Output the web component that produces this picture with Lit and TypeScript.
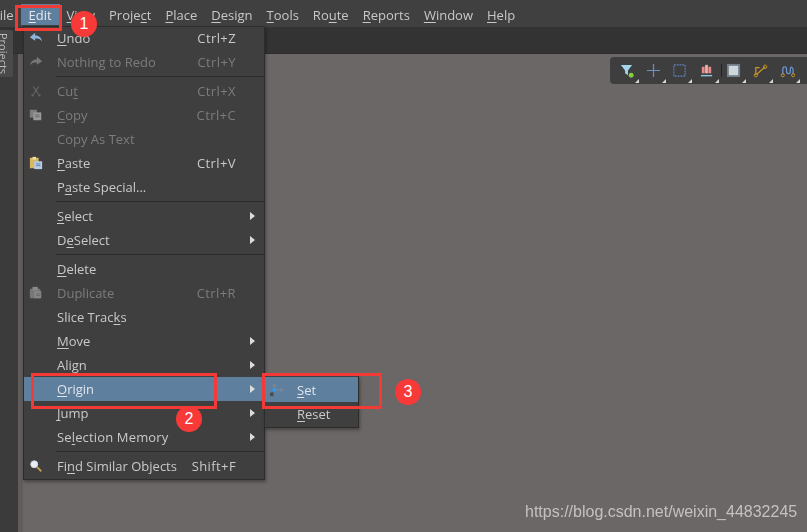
import { LitElement, html, css, svg } from "lit";
import { customElement } from "lit/decorators.js";

type Item = {
  label?: unknown;
  key?: string;
  off?: boolean;
  sub?: boolean;
  sel?: boolean;
  wide?: boolean;
  icon?: unknown;
  sep?: boolean;
};

const u = (a: string, b: string, c: string) => html`${a}<u>${b}</u>${c}`;

const icons = {
  undo: svg`<path d="M1 7 L7 2 V5 C11 5 14 7 15 12 C13 9 11 8.5 7 8.5 V11 Z" fill="#8fb4dc"/>`,
  redo: svg`<path d="M15 7 L9 2 V5 C5 5 2 7 1 12 C3 9 5 8.5 9 8.5 V11 Z" fill="#777"/>`,
  cut: svg`<path d="M5 3 L11 12 M11 3 L5 12" stroke="#666" stroke-width="1.2" fill="none"/><circle cx="4" cy="13" r="1.3" fill="#666"/><circle cx="12" cy="13" r="1.3" fill="#666"/>`,
  copy: svg`<rect x="1" y="2" width="8" height="9" fill="#7d7d7d"/><rect x="5" y="5" width="9" height="9" fill="#999"/><path d="M7 8h5M7 10h5" stroke="#666"/>`,
  paste: svg`<rect x="1" y="2" width="10" height="12" fill="#d8b860"/><rect x="4" y="1" width="4" height="3" fill="#eee0a0"/><rect x="6" y="6" width="9" height="9" fill="#b6cbe6"/><path d="M8 9h5M8 11h5" stroke="#5c7da6"/>`,
  dup: svg`<rect x="1" y="3" width="12" height="11" rx="1" fill="#777"/><rect x="4" y="1" width="6" height="4" fill="#8a8a8a"/><rect x="6" y="6" width="8" height="8" fill="#888"/><path d="M8 9h5M8 11h5" stroke="#666"/>`,
  find: svg`<circle cx="6" cy="6" r="4" fill="#e8eef4" stroke="#cfd6dc"/><path d="M9 9 L14 14" stroke="#c49a50" stroke-width="2.2"/>`,
};

const items: Item[] = [
  { label: u("", "U", "ndo"), key: "Ctrl+Z", icon: icons.undo },
  { label: "Nothing to Redo", key: "Ctrl+Y", off: true, icon: icons.redo },
  { sep: true },
  { label: u("Cu", "t", ""), key: "Ctrl+X", off: true, icon: icons.cut },
  { label: u("", "C", "opy"), key: "Ctrl+C", off: true, icon: icons.copy },
  { label: "Copy As Text", off: true },
  { label: u("", "P", "aste"), key: "Ctrl+V", icon: icons.paste },
  { label: u("P", "a", "ste Special...") },
  { sep: true },
  { label: u("", "S", "elect"), sub: true },
  { label: u("D", "e", "Select"), sub: true },
  { sep: true },
  { label: u("", "D", "elete") },
  { label: "Duplicate", key: "Ctrl+R", off: true, icon: icons.dup },
  { label: u("Slice Trac", "k", "s") },
  { label: u("", "M", "ove"), sub: true },
  { label: "Align", sub: true },
  { label: u("", "O", "rigin"), sub: true, sel: true },
  { label: u("", "J", "ump"), sub: true },
  { label: u("Se", "l", "ection Memory"), sub: true, wide: true },
  { sep: true },
  { label: u("Fi", "n", "d Similar Objects"), key: "Shift+F", icon: icons.find },
];

const bar = [
  u("", "F", "ile"), u("", "E", "dit"), u("", "V", "iew"), u("Proje", "c", "t"),
  u("", "P", "lace"), u("", "D", "esign"), u("", "T", "ools"), u("Ro", "u", "te"),
  u("", "R", "eports"), u("", "W", "indow"), u("", "H", "elp"),
];

const tools = [
  svg`<path d="M2 2H14L9.5 8V13L6.5 11V8Z" fill="#a4d4ea"/><circle cx="13" cy="13" r="2.6" fill="#7fd23c"/>`,
  svg`<path d="M8 1V15M1 8H15" stroke="#6a8fc4" stroke-width="1.3"/>`,
  svg`<rect x="2" y="2" width="12" height="12" fill="none" stroke="#5f82c0" stroke-width="1.2" stroke-dasharray="2 1"/>`,
  svg`<rect x="3" y="4" width="3" height="7" fill="#e88a8a"/><rect x="10" y="4" width="3" height="7" fill="#e88a8a"/><rect x="6.5" y="2" width="3" height="9" fill="#e8b0a8"/><path d="M2 13.5H14" stroke="#8fc4e8" stroke-width="1.5"/>`,
  svg`<rect x="1" y="1" width="14" height="14" fill="#6f7d88"/><rect x="3" y="3" width="10" height="10" fill="#cfd6da"/>`,
  svg`<path d="M3 13V5H7M4 12L13 4" stroke="#c89628" stroke-width="1.3" fill="none"/><circle cx="3" cy="13" r="1.8" fill="none" stroke="#c89628"/><circle cx="13" cy="4" r="1.8" fill="none" stroke="#c89628"/>`,
  svg`<path d="M3 12V7C3 3 7 3 7 7V9C7 12 11 12 11 9V7C11 3 14 4 14 8V12" stroke="#6d9ad6" stroke-width="1.3" fill="none"/><circle cx="3" cy="13" r="1.7" fill="none" stroke="#c89628"/><circle cx="14" cy="13" r="1.7" fill="none" stroke="#c89628"/>`,
];

@customElement("app-root")
export class AppRoot extends LitElement {
  static styles = css`
    :host {
      display: block;
      position: relative;
      width: 807px;
      height: 532px;
      overflow: hidden;
      background: #6b6766;
      font-family: "Open Sans", "Noto Sans", sans-serif;
      font-size: 13px;
      color: #c8c8c8;
    }
    u { text-underline-offset: 2px; }
    .soft { filter: blur(0.35px); }
    .shell { display: grid; grid-template-rows: 27px 27px 1fr; height: 100%; }
    .menubar { display: flex; background: #404040; margin-left: -14px; align-items: flex-start; }
    .top { display: flex; align-items: center; padding: 0 7px; height: 21px; margin-top: 4px; }
    .top.on { background: #5f7f9f; color: #e4e8ec; width: 23px; justify-content: center; padding: 0 8px; }
    .toolstrip { background: #333; border-bottom: 1px solid #2e2e2e; }
    .body { display: grid; grid-template-columns: 18px 5px 1fr; }
    .side { background: #3b3b3b; }
    .gut { background: #5f5c5b; }
    .tab {
      position: absolute; left: 0; top: 30px; width: 13px; height: 47px;
      background: #4a4a4a; border-radius: 0 2px 2px 0; color: #bdbdbd;
      writing-mode: vertical-rl; font-size: 11px; line-height: 13px; padding: 3px 3px 0 0; box-sizing: border-box;
      white-space: nowrap;
    }
    .menu, .submenu {
      position: absolute; background: #3f3f3f; border: 1px solid #2c2c2c;
      box-shadow: 1px 2px 3px rgba(0,0,0,.35); box-sizing: border-box;
    }
    .menu { left: 23px; top: 26px; width: 242px; height: 454px; }
    .rows { margin-top: -1px; }
    .submenu { left: 264px; top: 375px; width: 95px; height: 53px; padding-top: 1px; }
    .row {
      display: grid; grid-template-columns: 33px 1fr auto 28px; align-items: center;
      height: 24.1px; white-space: nowrap; color: #c9c9c9;
    }
    .row.off { color: #7c7c7c; }
    .row.sel { background: #5f7f9f; color: #dfe4e9; }
    .row.wide > span:nth-child(2) { letter-spacing: .15px; }
    .ic { display: flex; padding-left: 5px; }
    .ic svg { width: 14px; height: 14px; }
    .key { text-align: right; letter-spacing: .4px; }
    .arrow {
      justify-self: end; margin-right: 9px; width: 0; height: 0;
      border-left: 5px solid #dcdcdc; border-top: 4px solid transparent; border-bottom: 4px solid transparent;
    }
    .sep { height: 4.6px; display: flex; align-items: center; padding-left: 32px; }
    .sep i { display: block; height: 1px; flex: 1; background: #2b2b2b; }
    .subrow { display: grid; grid-template-columns: 32px 1fr; align-items: center; height: 25px; color: #c9c9c9; }
    .subrow.plain { height: 24px; }
    .subrow.sel { background: #5f7f9f; color: #dfe4e9; }
    .palette {
      position: absolute; left: 610px; top: 57px; width: 197px; height: 27px;
      background: #3e3e3e; border-radius: 4px 0 0 4px; display: grid;
      grid-template-columns: repeat(7, 26.8px); padding-left: 3px; box-sizing: border-box;
    }
    .tool { position: relative; display: flex; align-items: center; justify-content: center; }
    .tool svg { width: 15px; height: 15px; }
    .tool::after {
      content: ""; position: absolute; right: 1px; bottom: 1px;
      border-left: 4px solid transparent; border-bottom: 4px solid #d8d8d8;
    }
    .vline { position: absolute; left: 111px; top: 7px; width: 1px; height: 13px; background: #222; }
    .box { position: absolute; border: 3px solid #f23b36; box-sizing: border-box; pointer-events: none; }
    .b1 { left: 15px; top: 5px; width: 47px; height: 26px; }
    .b2 { left: 31px; top: 373px; width: 186px; height: 36px; }
    .b3 { left: 262px; top: 373px; width: 120px; height: 36px; }
    .dot {
      position: absolute; width: 26px; height: 26px; border-radius: 50%; background: #f73a38;
      color: #fff; display: flex; align-items: center; justify-content: center;
      font: 16px "Liberation Sans", sans-serif;
    }
    .d1 { left: 71px; top: 11px; }
    .d2 { left: 176px; top: 406px; }
    .d3 { left: 395px; top: 379px; }
    .mark {
      position: absolute; left: 525px; top: 502px;
      font: 16px/20px "Liberation Sans", sans-serif; color: #c4c2c0; white-space: nowrap;
    }
  `;

  private row(i: Item) {
    if (i.sep) return html`<div class="sep"><i></i></div>`;
    return html`<div class="row ${i.off ? "off" : ""} ${i.sel ? "sel" : ""} ${i.wide ? "wide" : ""}">
      <div class="ic">${i.icon ? html`<svg viewBox="0 0 16 16">${i.icon}</svg>` : ""}</div>
      <span>${i.label}</span>
      <span class="key">${i.key ?? ""}</span>
      ${i.sub ? html`<span class="arrow"></span>` : html`<span></span>`}
    </div>`;
  }

  render() {
    return html`
      <div class="shell soft">
        <div class="menubar">
          ${bar.map((b, n) => html`<div class="top ${n === 1 ? "on" : ""}">${b}</div>`)}
        </div>
        <div class="toolstrip"></div>
        <div class="body"><div class="side"></div><div class="gut"></div><div></div></div>
      </div>
      <div class="tab soft">Projects</div>
      <div class="palette soft">
        ${tools.map((t) => html`<div class="tool"><svg viewBox="0 0 16 16">${t}</svg></div>`)}
        <div class="vline"></div>
      </div>
      <div class="menu soft"><div class="rows">${items.map((i) => this.row(i))}</div></div>
      <div class="submenu soft">
        <div class="subrow sel">
          <div class="ic"><svg viewBox="0 0 16 16">
            <path d="M5 8H14M12 6L15 8L12 10M5 8V2M3 3.5L5 1.5L7 3.5" stroke="#8a8a8a" fill="none"/>
            <rect x="0" y="11" width="4" height="4" fill="#4a4a4a"/>
            <path d="M2 13L5 8" stroke="#555"/>
            <circle cx="5" cy="8" r="2.4" fill="#2f9be8"/>
          </svg></div>
          <span>${u("", "S", "et")}</span>
        </div>
        <div class="subrow plain"><div></div><span>${u("", "R", "eset")}</span></div>
      </div>
      <div class="box b1"></div><div class="box b2"></div><div class="box b3"></div>
      <div class="dot d1">1</div><div class="dot d2">2</div><div class="dot d3">3</div>
      <div class="mark soft">https://blog.csdn.net/weixin_44832245</div>
    `;
  }
}
